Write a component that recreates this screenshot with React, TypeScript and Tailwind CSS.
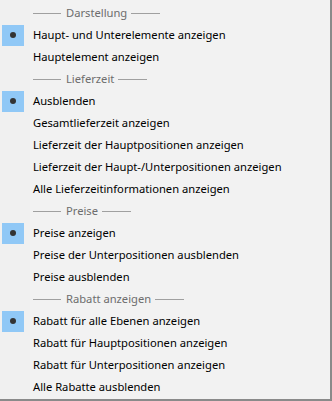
import React from 'react';

type Row =
  | { kind: 'header'; label: string }
  | { kind: 'item'; label: string; checked?: boolean };

const rows: Row[] = [
  { kind: 'header', label: 'Darstellung' },
  { kind: 'item', label: 'Haupt- und Unterelemente anzeigen', checked: true },
  { kind: 'item', label: 'Hauptelement anzeigen' },
  { kind: 'header', label: 'Lieferzeit' },
  { kind: 'item', label: 'Ausblenden', checked: true },
  { kind: 'item', label: 'Gesamtlieferzeit anzeigen' },
  { kind: 'item', label: 'Lieferzeit der Hauptpositionen anzeigen' },
  { kind: 'item', label: 'Lieferzeit der Haupt-/Unterpositionen anzeigen' },
  { kind: 'item', label: 'Alle Lieferzeitinformationen anzeigen' },
  { kind: 'header', label: 'Preise' },
  { kind: 'item', label: 'Preise anzeigen', checked: true },
  { kind: 'item', label: 'Preise der Unterpositionen ausblenden' },
  { kind: 'item', label: 'Preise ausblenden' },
  { kind: 'header', label: 'Rabatt anzeigen' },
  { kind: 'item', label: 'Rabatt für alle Ebenen anzeigen', checked: true },
  { kind: 'item', label: 'Rabatt für Hauptpositionen anzeigen' },
  { kind: 'item', label: 'Rabatt für Unterpositionen anzeigen' },
  { kind: 'item', label: 'Alle Rabatte ausblenden' },
];

const App = () => {
  return (
    <div className="w-[332px] h-[401px] bg-[#f2f2f2] border-r-2 border-b-2 border-[#8a8a8a] overflow-hidden font-['Noto_Sans',sans-serif] text-[11.2px]">
      <div className="relative pt-[2px]">
        {/* gutter */}
        <div className="absolute left-0 top-0 w-[30px] h-[401px] bg-[#f0f0f0]"></div>
        {rows.map((row, i) =>
          row.kind === 'header' ? (
            <div key={i} className="relative h-[22px] flex items-center pl-[33px] text-[#6d6d6d]">
              <div className="w-[28px] h-px bg-[#a0a0a0]"></div>
              <span className="pl-[5px] pr-[4px] leading-none">{row.label}</span>
              <div className="w-[29px] h-px bg-[#a0a0a0]"></div>
            </div>
          ) : (
            <div key={i} className="relative h-[22px] flex items-center text-black">
              <div className="w-[33px] h-[22px] flex items-center pl-[2px]">
                {row.checked && (
                  <div className="w-[22px] h-[21px] bg-[#90c8f6] flex items-center justify-center">
                    <div className="w-[6px] h-[6px] rounded-full bg-[#333]"></div>
                  </div>
                )}
              </div>
              <span className="leading-none whitespace-nowrap">{row.label}</span>
            </div>
          )
        )}
      </div>
    </div>
  );
};

export default App;
